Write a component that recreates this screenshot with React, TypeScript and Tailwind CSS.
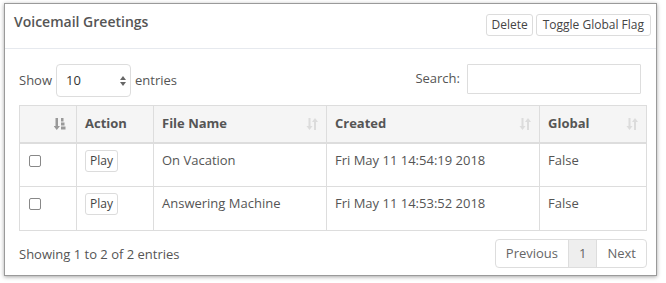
import React from 'react';

const SortIcon = ({ active = false }: { active?: boolean }) => (
  <svg width="12" height="14" viewBox="0 0 12 14" className="shrink-0">
    {active ? (
      <g fill="#999">
        <path d="M1.5 1h2.5v8h2l-3.25 4-3.25-4h2z" />
        <rect x="7" y="1" width="2.5" height="3.5" />
        <rect x="7" y="5.5" width="3.5" height="3" />
        <rect x="7" y="9.5" width="4.5" height="3" />
      </g>
    ) : (
      <g fill="#dcdcdc">
        <path d="M2.5 1h2v8h2l-3 4-3-4h2z" />
        <path d="M8 13h2V5h2L9 1 6 5h2z" />
      </g>
    )}
  </svg>
);

const rows = [
  { name: 'On Vacation', created: 'Fri May 11 14:54:19 2018', global: 'False' },
  { name: 'Answering Machine', created: 'Fri May 11 14:53:52 2018', global: 'False' },
];

const SmallButton = ({ children, className = 'px-[4px]' }: { children: React.ReactNode; className?: string }) => (
  <button className={`h-[22px] border border-[#dcdcdc] rounded-[3px] bg-white text-[12px] text-[#444] leading-none ${className}`}>
    {children}
  </button>
);

export default function App() {
  return (
    <div className="w-[666px] h-[283px] bg-white pt-[3px] pl-[4px]" style={{ fontFamily: '"Open Sans", sans-serif' }}>
      <div className="w-[653px] h-[273px] bg-white border border-[#9a9a9a] shadow-[0_1px_4px_rgba(0,0,0,0.35)] text-[#555] text-[13px]">
        {/* Header */}
        <div className="h-[45px] flex items-center justify-between pl-[9px] pr-[5px] border-b border-[#e6e9ee]">
          <h5 className="text-[14px] font-semibold text-[#555] -mt-[9px]">Voicemail Greetings</h5>
          <div className="flex gap-[3px] -mt-[3px]">
            <SmallButton className="px-[4px]">Delete</SmallButton>
            <SmallButton className="px-[6px]">Toggle Global Flag</SmallButton>
          </div>
        </div>

        <div className="px-[14px]">
          {/* Controls */}
          <div className="flex items-center justify-between pt-[15px] pr-[1px]">
            <div className="flex items-center gap-[4px]">
              <span>Show</span>
              <div className="w-[75px] h-[33px] border border-[#ddd] rounded-[4px] flex items-center justify-between pl-[9px] pr-[3px]">
                <span className="text-[#333]">10</span>
                <svg width="8" height="12" viewBox="0 0 8 12">
                  <path d="M4 1l3 4H1z" fill="#666" />
                  <path d="M4 11l3-4H1z" fill="#666" />
                </svg>
              </div>
              <span>entries</span>
            </div>
            <div className="flex items-center gap-[7px] -mt-[3px]">
              <span>Search:</span>
              <div className="w-[174px] h-[30px] border border-[#ddd] rounded-[1px]" />
            </div>
          </div>

          {/* Table */}
          <table className="mt-[8px] w-[628px] border-collapse text-left">
            <thead>
              <tr className="h-[37px] bg-[#f5f5f5] text-[#555]">
                <th className="w-[57px] border border-[#ddd] border-b-2 px-[10px]">
                  <div className="flex justify-end"><SortIcon active /></div>
                </th>
                <th className="w-[77px] border border-[#ddd] border-b-2 px-[8px] font-bold">Action</th>
                <th className="w-[173px] border border-[#ddd] border-b-2 px-[8px] font-bold">
                  <div className="flex items-center justify-between">File Name<SortIcon /></div>
                </th>
                <th className="w-[213px] border border-[#ddd] border-b-2 px-[8px] font-bold">
                  <div className="flex items-center justify-between">Created<SortIcon /></div>
                </th>
                <th className="border border-[#ddd] border-b-2 px-[8px] font-bold">
                  <div className="flex items-center justify-between">Global<SortIcon /></div>
                </th>
              </tr>
            </thead>
            <tbody>
              {rows.map((r) => (
                <tr key={r.name} className="h-[44px]">
                  <td className="border border-[#ddd] px-[8px] align-top pt-[10px]">
                    <div className="w-[12px] h-[12px] border border-[#888] rounded-[2px] mt-[1px] ml-[1px] bg-white" />
                  </td>
                  <td className="border border-[#ddd] px-[8px] align-top pt-[6px]">
                    <SmallButton className="px-[4px]">Play</SmallButton>
                  </td>
                  <td className="border border-[#ddd] px-[8px] align-top pt-[7px]">{r.name}</td>
                  <td className="border border-[#ddd] px-[8px] align-top pt-[7px]">{r.created}</td>
                  <td className="border border-[#ddd] px-[8px] align-top pt-[7px]">{r.global}</td>
                </tr>
              ))}
            </tbody>
          </table>

          {/* Footer */}
          <div className="flex items-center justify-between mt-[8px] w-[628px]">
            <span className="mt-[2px]">Showing 1 to 2 of 2 entries</span>
            <div className="flex h-[29px] border border-[#ddd] rounded-[4px] overflow-hidden text-[#666]">
              <span className="px-[10px] flex items-center">Previous</span>
              <span className="px-[10px] flex items-center bg-[#eee] border-x border-[#ddd]">1</span>
              <span className="px-[10px] flex items-center">Next</span>
            </div>
          </div>
        </div>
      </div>
    </div>
  );
}
